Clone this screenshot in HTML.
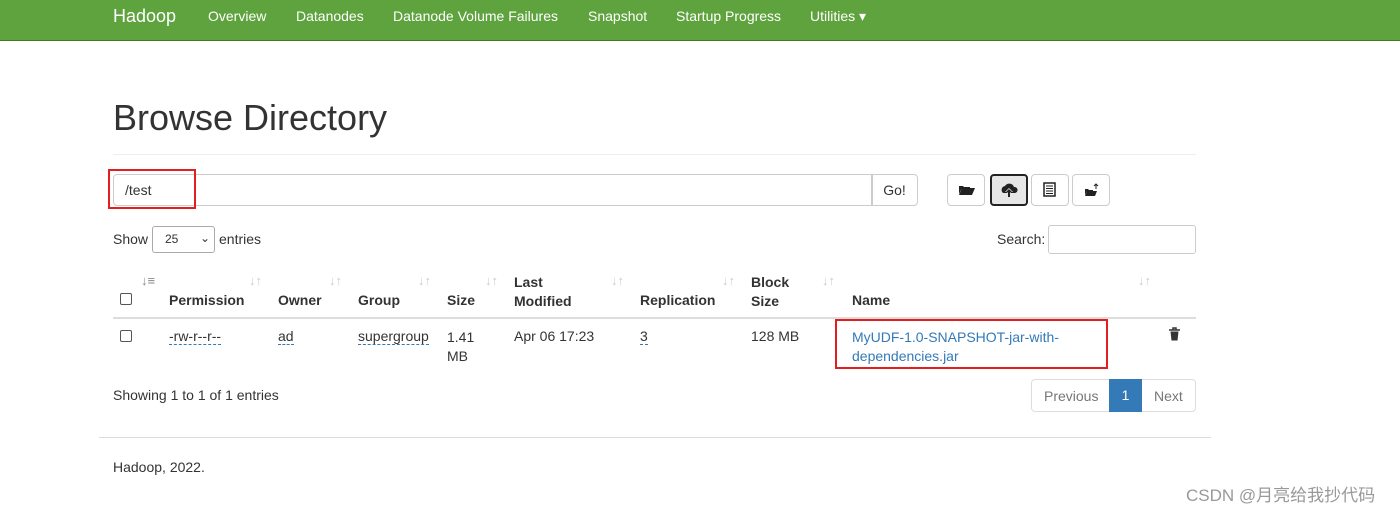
<!DOCTYPE html>
<html><head><meta charset="utf-8"><style>
*{box-sizing:border-box}
body{margin:0;width:1400px;height:509px;background:#fff;font-family:"Liberation Sans","Noto Sans CJK SC",sans-serif;font-size:14px;color:#333;position:relative;overflow:hidden}
.nav{position:absolute;left:0;top:0;width:1400px;height:41px;background:#5fa33e;border-bottom:1px solid #3e7a26}
.nav span{position:absolute;top:8px;color:#fff;font-size:14px}
.abs{position:absolute}
.btn{position:absolute;top:174px;width:38px;height:32px;border:1px solid #ccc;border-radius:4px;background:#fff}
.th{position:absolute;font-weight:bold;color:#333}
.sort{position:absolute;color:#ccc;font-size:13px}
.dot{border-bottom:1px dashed #337ab7}
.cb{position:absolute;width:12px;height:12px;border:1px solid #555;border-radius:2px;background:#fff}
</style></head><body>
<div class="nav">
<span style="left:113px;font-size:18px;top:6px">Hadoop</span>
<span style="left:208px">Overview</span>
<span style="left:296px">Datanodes</span>
<span style="left:393px">Datanode Volume Failures</span>
<span style="left:588px">Snapshot</span>
<span style="left:676px">Startup Progress</span>
<span style="left:810px">Utilities ▾</span>
</div>
<div class="abs" style="left:113px;top:97px;font-size:36px;color:#333">Browse Directory</div>
<div class="abs" style="left:113px;top:154px;width:1083px;height:1px;background:#eee"></div>
<div class="abs" style="left:113px;top:174px;width:760px;height:32px;border:1px solid #ccc;border-radius:4px 0 0 4px"></div>
<div class="abs" style="left:125px;top:182px">/test</div>
<div class="abs" style="left:108px;top:169px;width:88px;height:40px;border:2px solid #e02020"></div>
<div class="abs" style="left:871px;top:174px;width:47px;height:32px;border:1px solid #ccc;border-radius:0 4px 4px 0;text-align:center;line-height:30px">Go!</div>
<div class="btn" style="left:947px"><svg width="36" height="30"><path d="M11 20 L14 13 H27 L24 20 Z M11 19 V11 H15 L16 12 H22 V13 H14 L11 19Z" fill="#222"/></svg></div>
<div class="btn" style="left:990px;border:2px solid #222;background:#e6e6e6"><svg width="34" height="28"><path d="M11 17 a4 4 0 0 1 2-7 a5 5 0 0 1 9 1 a3 3 0 0 1 1 6 Z" fill="#222"/><path d="M17 12 L13 16 H15.5 V21 H18.5 V16 H21Z" fill="#e6e6e6"/><path d="M17 13 L14 16 H16 V21 H18 V16 H20Z" fill="#222"/></svg></div>
<div class="btn" style="left:1031px"><svg width="36" height="30"><rect x="12" y="8" width="11" height="13" fill="none" stroke="#222" stroke-width="1.5"/><path d="M14 11h7M14 13.5h7M14 16h7M14 18.5h7" stroke="#222"/></svg></div>
<div class="btn" style="left:1072px"><svg width="36" height="30"><path d="M12 21 L14 16 H24 L22 21 Z M12 20 V14 H15 L16 15 H20 V16 H14Z" fill="#222"/><path d="M23 9v5M21 11l2-2 2 2" stroke="#222" fill="none"/></svg></div>
<div class="abs" style="left:113px;top:231px">Show</div>
<div class="abs" style="left:152px;top:226px;width:63px;height:27px;border:1px solid #aaa;border-radius:3px;font-size:12px;padding:5px 0 0 12px">25 <span style="position:absolute;right:4px;top:4px">⌄</span></div>
<div class="abs" style="left:219px;top:231px">entries</div>
<div class="abs" style="left:997px;top:231px">Search:</div>
<div class="abs" style="left:1048px;top:225px;width:148px;height:29px;border:1px solid #ccc;border-radius:3px"></div>
<div class="cb" style="left:120px;top:293px"></div>
<span class="sort" style="left:141px;top:273px;color:#888">↓≡</span>
<div class="th" style="left:169px;top:292px">Permission</div><span class="sort" style="left:249px;top:273px">↓↑</span>
<div class="th" style="left:278px;top:292px">Owner</div><span class="sort" style="left:329px;top:273px">↓↑</span>
<div class="th" style="left:358px;top:292px">Group</div><span class="sort" style="left:418px;top:273px">↓↑</span>
<div class="th" style="left:447px;top:292px">Size</div><span class="sort" style="left:485px;top:273px">↓↑</span>
<div class="th" style="left:514px;top:273px;line-height:19px">Last<br>Modified</div><span class="sort" style="left:611px;top:273px">↓↑</span>
<div class="th" style="left:640px;top:292px">Replication</div><span class="sort" style="left:722px;top:273px">↓↑</span>
<div class="th" style="left:751px;top:273px;line-height:19px">Block<br>Size</div><span class="sort" style="left:822px;top:273px">↓↑</span>
<div class="th" style="left:852px;top:292px">Name</div><span class="sort" style="left:1138px;top:273px">↓↑</span>
<div class="abs" style="left:113px;top:317px;width:1083px;height:2px;background:#ddd"></div>
<div class="cb" style="left:120px;top:330px"></div>
<div class="abs" style="left:169px;top:328px"><span class="dot">-rw-r--r--</span></div>
<div class="abs" style="left:278px;top:328px"><span class="dot">ad</span></div>
<div class="abs" style="left:358px;top:328px"><span class="dot">supergroup</span></div>
<div class="abs" style="left:447px;top:328px;line-height:19px">1.41<br>MB</div>
<div class="abs" style="left:514px;top:328px">Apr 06 17:23</div>
<div class="abs" style="left:640px;top:328px"><span class="dot">3</span></div>
<div class="abs" style="left:751px;top:328px">128 MB</div>
<div class="abs" style="left:852px;top:328px;line-height:19px;color:#337ab7">MyUDF-1.0-SNAPSHOT-jar-with-<br>dependencies.jar</div>
<div class="abs" style="left:835px;top:319px;width:273px;height:50px;border:2px solid #e02020"></div>
<svg class="abs" style="left:1168px;top:327px" width="13" height="15"><path d="M1 3h11M5 3V1h3v2" stroke="#333" fill="none" stroke-width="1.5"/><path d="M2.5 4.5h8l-1 9h-6z" fill="#333"/></svg>
<div class="abs" style="left:113px;top:387px">Showing 1 to 1 of 1 entries</div>
<div class="abs" style="left:1031px;top:379px;width:165px;height:33px;border:1px solid #ddd;border-radius:4px"></div>
<div class="abs" style="left:1044px;top:388px;color:#777">Previous</div>
<div class="abs" style="left:1109px;top:379px;width:33px;height:33px;background:#337ab7;color:#fff;text-align:center;line-height:33px">1</div>
<div class="abs" style="left:1154px;top:388px;color:#777">Next</div>
<div class="abs" style="left:99px;top:437px;width:1112px;height:1px;background:#ddd"></div>
<div class="abs" style="left:113px;top:459px">Hadoop, 2022.</div>
<div class="abs" style="left:1186px;top:481px;font-size:17px;color:#999">CSDN @月亮给我抄代码</div>
</body></html>
